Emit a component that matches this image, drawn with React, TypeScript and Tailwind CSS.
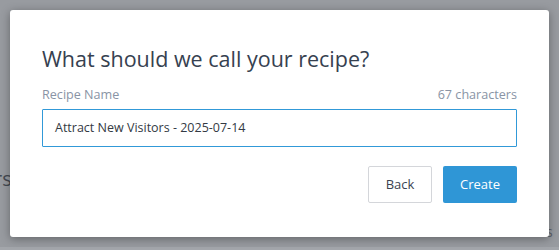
import React from 'react';

const font = { fontFamily: '"Open Sans", "Noto Sans", sans-serif' };

const App: React.FC = () => {
    return (
        <div className="relative w-[559px] h-[250px] overflow-hidden bg-[#989ba0]" style={font}>
            {/* page behind the overlay */}
            <div className="absolute left-[-6px] top-[164px] text-[20px] text-[#454a52]">rs</div>
            <div className="absolute left-[546px] top-[221px] text-[14px] text-[#5d6168]">s</div>
            <div className="absolute left-0 bottom-0 w-full h-[3px] bg-[#a3a6ab]" />

            {/* modal */}
            <div className="absolute left-[10px] top-[10px] w-[539px] h-[227px] bg-white rounded-[3px] shadow-[0_2px_10px_rgba(0,0,0,0.35)] px-[32px] pt-[34px]">
                <h2 className="text-[21.5px] leading-[30px] text-[#364150]">
                    What should we call your recipe?
                </h2>

                <div className="mt-[12px] flex justify-between text-[12.6px] leading-[18px] text-[#8994a5]">
                    <span>Recipe Name</span>
                    <span>67 characters</span>
                </div>

                <div className="mt-[5px] h-[38px] border border-[#3199d8] rounded-[1px] flex items-center px-[12px] text-[12.5px] text-[#333a44]">
                    Attract New Visitors - 2025-07-14
                </div>

                <div className="mt-[19px] flex justify-end gap-[11px]">
                    <button className="w-[64px] h-[37px] border border-[#d4d6da] rounded-[2px] bg-white text-[13px] text-[#3a4351]">
                        Back
                    </button>
                    <button className="w-[74px] h-[37px] rounded-[2px] bg-[#2f96d6] text-[13px] text-white">
                        Create
                    </button>
                </div>
            </div>
        </div>
    );
};

export default App;
